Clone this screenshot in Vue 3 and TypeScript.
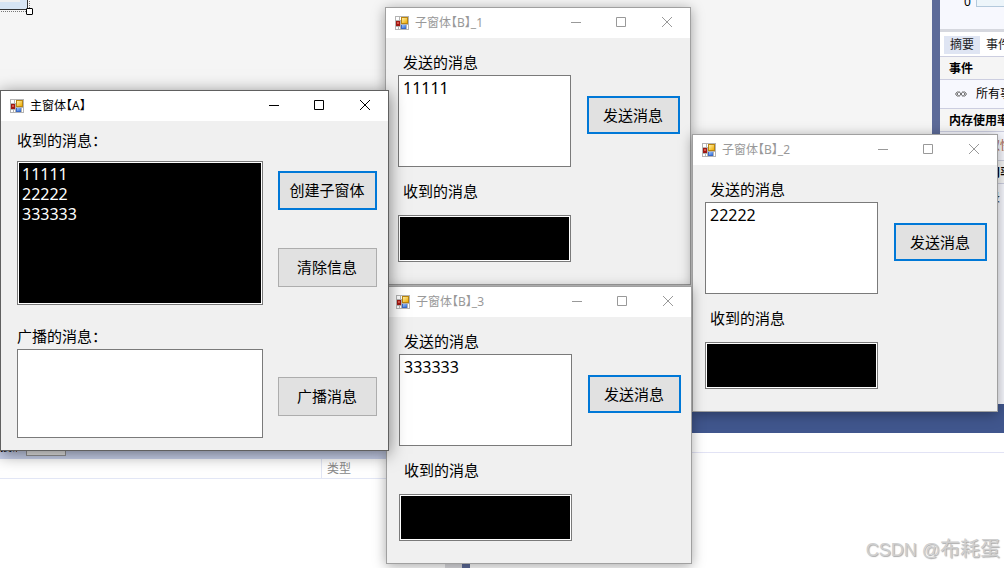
<script setup lang="ts">
import { ref } from 'vue'

interface ChildWindow {
  id: number
  sent: string
  received: string
}

const log = ref<string>('11111\n22222\n333333')
const broadcast = ref<string>('')
const children = ref<ChildWindow[]>([
  { id: 1, sent: '11111', received: '' },
  { id: 2, sent: '22222', received: '' },
  { id: 3, sent: '333333', received: '' },
])

function createChild(): void {
  children.value.push({ id: children.value.length + 1, sent: '', received: '' })
}

function clearLog(): void {
  log.value = ''
}

function send(child: ChildWindow): void {
  log.value += (log.value ? '\n' : '') + child.sent
}

function sendAll(): void {
  children.value.forEach((child) => {
    child.received = broadcast.value
  })
}
</script>

<template>
  <div class="desktop">
    <svg width="0" height="0" class="defs" aria-hidden="true">
      <defs>
        <linearGradient id="gold" x1="0" y1="0" x2="1" y2="1">
          <stop offset="0" stop-color="#fff0a8" />
          <stop offset="1" stop-color="#f0ac00" />
        </linearGradient>
        <linearGradient id="sky" x1="0" y1="0" x2="1" y2="1">
          <stop offset="0" stop-color="#9fc4fa" />
          <stop offset="1" stop-color="#2f6bd8" />
        </linearGradient>
        <symbol id="form-icon" viewBox="0 0 14 14">
          <path fill="#b4b4b4" d="M0 0h14v14H0z" />
          <path fill="#fff" d="M1 1h3v3H1zM5 1h1v3H5zM1 11h2v2H1zM4 11h1v2H4zM12 9h1v4h-1z" />
          <path fill="#a01812" d="M1 5h4v5H1z" />
          <path fill="#d9564a" d="M2 6h2v2H2z" />
          <path fill="#b98511" d="M6 1h7v7H6z" />
          <path fill="url(#gold)" d="M7 2h5v5H7z" />
          <path fill="#3a68c4" d="M6 9h5v4H6z" />
          <path fill="url(#sky)" d="M7 9h4v3H7z" />
        </symbol>
        <symbol id="min" viewBox="0 0 12 12"><path d="M2 5.5h10" stroke="currentColor" /></symbol>
        <symbol id="max" viewBox="0 0 12 12"><path d="M1.500.5h9v9h-9z" fill="none" stroke="currentColor" /></symbol>
        <symbol id="close" viewBox="0 0 12 12"><path d="M1 0l10 10M11 0L1 10" stroke="currentColor" /></symbol>
      </defs>
    </svg>

    <div class="ide">
      <div class="upper">
        <div class="designer">
          <div class="form-corner"><span class="form-inner"></span></div>
          <span class="handle"></span>
        </div>
        <aside class="diagnostics">
          <div class="chart"><span>0</span><i></i></div>
          <nav class="tabs"><a href="#summary" class="current">摘要</a><a href="#events">事件</a></nav>
          <h2>事件</h2>
          <p class="all"><svg width="12" height="6" viewBox="0 0 12 6"><path d="M2.500.5L.5 3l2 2.500M4 .5l2 2.500-2 2.500L2 3zM8 .5L10 3 8 5.500 6 3zM9.500.5l2 2.500-2 2.500" fill="none" stroke="#666" /></svg>所有事件</p>
          <h2>内存使用率</h2>
          <p class="shot">截取快照</p>
          <h2>CPU 使用率</h2>
          <p>记录</p>
        </aside>
      </div>
      <div class="bar"></div>
      <div class="lower">
        <section class="errors">
          <div class="toolbar"><span>搜索</span><i></i></div>
          <div class="head"><span>类型</span></div>
          <div class="list"><i></i></div>
        </section>
        <section class="output"></section>
      </div>
    </div>

    <section v-for="child in children" :key="child.id" class="window child" :class="'child-' + child.id">
      <header class="titlebar">
        <svg class="app-icon"><use href="#form-icon" /></svg>
        <h1>子窗体【B】_{{ child.id }}</h1>
        <button type="button" aria-label="最小化"><svg><use href="#min" /></svg></button>
        <button type="button" aria-label="最大化"><svg><use href="#max" /></svg></button>
        <button type="button" aria-label="关闭"><svg><use href="#close" /></svg></button>
      </header>
      <div class="child-body">
        <div class="fields">
          <label :for="'sent-' + child.id">发送的消息</label>
          <textarea :id="'sent-' + child.id" v-model="child.sent" class="sent" spellcheck="false"></textarea>
          <label :for="'received-' + child.id" class="second">收到的消息</label>
          <textarea :id="'received-' + child.id" v-model="child.received" class="dark received" readonly></textarea>
        </div>
        <button type="button" class="push primary" @click="send(child)">发送消息</button>
      </div>
    </section>

    <section class="window main">
      <header class="titlebar">
        <svg class="app-icon"><use href="#form-icon" /></svg>
        <h1>主窗体【A】</h1>
        <button type="button" aria-label="最小化"><svg><use href="#min" /></svg></button>
        <button type="button" aria-label="最大化"><svg><use href="#max" /></svg></button>
        <button type="button" aria-label="关闭"><svg><use href="#close" /></svg></button>
      </header>
      <div class="main-body">
        <div class="fields log-group">
          <label for="log">收到的消息：</label>
          <textarea id="log" v-model="log" class="dark log" readonly></textarea>
        </div>
        <div class="actions">
          <button type="button" class="push primary" @click="createChild">创建子窗体</button>
          <button type="button" class="push" @click="clearLog">清除信息</button>
        </div>
        <div class="fields">
          <label for="broadcast">广播的消息：</label>
          <textarea id="broadcast" v-model="broadcast" class="broadcast"></textarea>
        </div>
        <div class="actions">
          <button type="button" class="push" @click="sendAll">广播消息</button>
        </div>
      </div>
    </section>

    <div class="watermark"><span>CSDN @</span>布耗蛋</div>
  </div>
</template>

<style>
body {
  margin: 0;
}
</style>

<style scoped>
* {
  box-sizing: border-box;
}

.desktop {
  position: relative;
  height: 100vh;
  overflow: hidden;
  font-family: "Noto Sans", "Noto Sans CJK SC", sans-serif;
  font-size: 15px;
  line-height: 20px;
  color: #000;
}

.defs {
  position: absolute;
}

h1,
h2,
p {
  margin: 0;
  font-weight: 400;
}

/* Development environment behind the windows */
.ide {
  display: flex;
  flex-direction: column;
  height: 100%;
  font-size: 12px;
}

.upper {
  display: flex;
  height: 404px;
}

.designer {
  position: relative;
  flex: 1;
  background: #f5f5f5;
  border-right: 8px solid #5d6b99;
}

.form-corner {
  width: 28px;
  height: 10px;
  background: #d6e4f3;
  border: solid #333;
  border-width: 0 1px 1px 0;
  outline: 1px dotted #777;
  outline-offset: 1px;
}

.form-inner {
  display: block;
  width: 20px;
  height: 2px;
  background: #f0f0f0;
}

.handle {
  position: absolute;
  left: 26px;
  top: 8px;
  width: 7px;
  height: 7px;
  background: #fff;
  border: 1px solid #000;
  border-radius: 1px;
}

.diagnostics {
  width: 64px;
  overflow: hidden;
  white-space: nowrap;
  background: #f7f8fe;
}

.chart {
  display: flex;
  gap: 5px;
  height: 32px;
  padding-left: 24px;
  border-bottom: 3px solid #d6d8df;
  line-height: 4px;
}

.chart i {
  width: 40px;
  height: 7px;
  border: solid #b4c9dc;
  border-width: 0 0 1px 1px;
  background: #edf5fa;
}

.tabs {
  display: flex;
  height: 24px;
  padding: 4px 4px 2px;
  background: #fff;
}

.tabs a {
  padding: 0 6px;
  line-height: 18px;
  color: #1e1e1e;
  text-decoration: none;
}

.tabs .current {
  background: #dfe5f3;
}

.diagnostics h2 {
  height: 24px;
  padding-left: 9px;
  border: solid #cccee0;
  border-width: 1px 0;
  background: #f5f5f5;
  font-size: 12px;
  font-weight: 700;
  line-height: 24px;
}

.diagnostics p {
  display: flex;
  align-items: center;
  gap: 9px;
  height: 28px;
  padding-left: 36px;
}

.diagnostics .all {
  padding-left: 15px;
}

.diagnostics svg {
  flex: none;
}

.diagnostics .shot {
  color: #a8674f;
}

.bar {
  height: 29px;
  background: #40568d;
}

.lower {
  display: flex;
  flex: 1;
}

.errors {
  display: flex;
  flex-direction: column;
  width: 470px;
  border-right: 8px solid #5d6b99;
  background: #fff;
}

.toolbar {
  display: flex;
  gap: 9px;
  height: 26px;
  background: #ccd5f0;
}

.toolbar span {
  width: 17px;
  overflow: hidden;
  line-height: 28px;
  white-space: nowrap;
}

.toolbar i {
  width: 40px;
  height: 23px;
  border: 1px solid #999;
  background: #eee;
}

.head {
  height: 20px;
  padding-left: 321px;
  border-bottom: 1px solid #e2e6f5;
  color: #888;
  line-height: 19px;
}

.head span {
  display: block;
  padding-left: 5px;
  border-left: 1px solid #e2e6f5;
}

.list {
  display: flex;
  flex: 1;
  justify-content: flex-end;
}

.list i {
  width: 17px;
  background: #dcdce0;
}

.output {
  flex: 1;
  height: 20px;
  border-bottom: 1px solid #e2e3f5;
}

/* Windows placed freely on the desktop */
.window {
  position: absolute;
  border: 1px solid #a0a0a0;
  background: #f0f0f0;
  box-shadow: 0 2px 12px rgba(0, 0, 0, 0.35);
}

.child {
  width: 306px;
}

.child-1 {
  left: 385px;
  top: 7px;
}

.child-2 {
  left: 692px;
  top: 134px;
}

.child-3 {
  left: 386px;
  top: 286px;
}

.main {
  left: 0;
  top: 90px;
  width: 389px;
  border-color: #606060;
  box-shadow: 0 3px 16px rgba(0, 0, 0, 0.5);
}

.titlebar {
  display: flex;
  align-items: center;
  height: 30px;
  padding-left: 9px;
  background: #fff;
  color: #999;
}

.main .titlebar {
  color: #000;
}

.app-icon {
  width: 14px;
  height: 14px;
}

.titlebar h1 {
  flex: 1;
  padding-left: 6px;
  font-size: 12px;
  font-feature-settings: "halt";
}

.titlebar button {
  display: flex;
  align-items: center;
  justify-content: center;
  width: 46px;
  height: 30px;
  padding: 0;
  border: 0;
  background: none;
  color: inherit;
}

.titlebar button svg {
  width: 12px;
  height: 12px;
}

.fields {
  display: flex;
  flex-direction: column;
}

.fields label {
  padding-left: 5px;
}

textarea {
  display: block;
  width: 100%;
  margin: 0;
  padding: 2px 4px;
  border: 1px solid #7a7a7a;
  border-radius: 0;
  outline: 0;
  resize: none;
  overflow: hidden;
  background: #fff;
  color: #000;
  font-family: inherit;
  font-size: 16px;
  line-height: 20px;
}

.dark {
  background: #000;
  color: #fff;
  box-shadow: inset 0 0 0 1px #fff;
}

.push {
  padding: 0 1px 1px 0;
  border: 1px solid #adadad;
  background: #e1e1e1;
  color: #000;
  font: inherit;
  white-space: nowrap;
}

.primary {
  border: 2px solid #0078d7;
}

.child-body {
  display: grid;
  grid-template-columns: 1fr 93px;
  gap: 16px;
  align-items: start;
  padding: 14px 10px 22px 12px;
}

.child-body .push {
  height: 38px;
  margin-top: 44px;
}

.sent {
  height: 92px;
  margin-top: 3px;
}

.second {
  margin: 14px 0;
}

.received {
  height: 47px;
}

.main-body {
  display: grid;
  grid-template-columns: 1fr 99px;
  gap: 21px 15px;
  padding: 9px 11px 12px 16px;
}

.main-body label {
  padding-left: 0;
}

.log {
  height: 144px;
  margin-top: 11px;
}

.broadcast {
  height: 89px;
  margin-top: 3px;
}

.actions {
  display: flex;
  flex-direction: column;
  gap: 38px;
  padding-top: 41px;
}

.actions .push {
  height: 39px;
}

.main-body .actions:last-child {
  padding-top: 51px;
}

.watermark {
  position: absolute;
  right: 4px;
  bottom: 4px;
  font-family: "Liberation Sans", "Noto Sans CJK SC", sans-serif;
  font-size: 20px;
  line-height: 28px;
  color: #cfcfcf;
  text-shadow: 1px 1px 1px #aaa;
}

.watermark span {
  font-size: 18px;
}
</style>
